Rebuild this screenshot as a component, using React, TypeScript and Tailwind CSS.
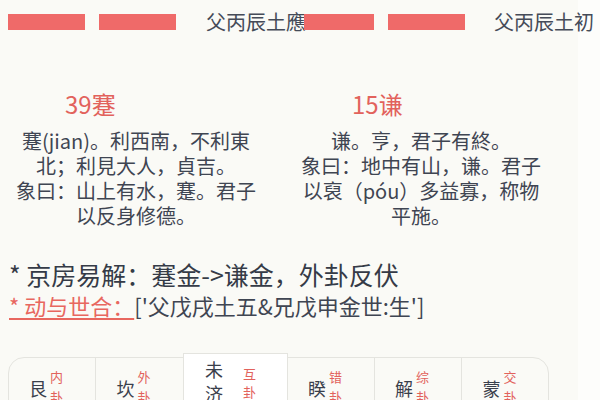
import React from 'react';

const tabs = [
  { id: 'gen', name: '艮', label: '内卦' },
  { id: 'kan', name: '坎', label: '外卦' },
  { id: 'weiji', name: '未济', label: '互卦', active: true },
  { id: 'kui', name: '睽', label: '错卦' },
  { id: 'jie', name: '解', label: '综卦' },
  { id: 'meng', name: '蒙', label: '交卦' },
];

function YaoRow({ text }: { text: string }) {
  return (
    <div className="flex items-center h-[16px]">
      <div className="w-[77px] h-[16px] bg-[#ef6a69]" />
      <div className="ml-[14px] w-[77px] h-[16px] bg-[#ef6a69]" />
      <div className="ml-[30px] text-[20px] leading-none whitespace-nowrap text-[#454b58]">{text}</div>
    </div>
  );
}

export default function App() {
  return (
    <div className="w-[600px] h-[400px] overflow-hidden bg-[#fdfdfb] font-['Noto_Sans_CJK_SC',sans-serif] text-[#3f4552]">
      <div className="w-[578px] h-full bg-[#fafaf6]">
        {/* 爻 */}
        <div className="flex pt-[14px] pl-[8px]">
          <YaoRow text="父丙辰土應" />
          <div className="-ml-[2px] flex items-center h-[16px]">
            <div className="w-[70px] h-[16px] bg-[#ef6a69]" />
            <div className="ml-[14px] w-[77px] h-[16px] bg-[#ef6a69]" />
            <div className="ml-[29px] text-[20px] leading-none whitespace-nowrap text-[#454b58]">父丙辰土初</div>
          </div>
        </div>

        {/* 本卦 / 变卦 */}
        <div className="flex pl-[12px] mt-[58px]">
          <div className="w-[248px]">
            <div className="pl-[53px] text-[24px] leading-[32px] text-[#e2625c]">39蹇</div>
            <div className="mt-[8px] text-center text-[20px] leading-[25px]">
              蹇(jian)。利西南，不利東北；利見大人，貞吉。
              <br />
              象曰：山上有水，蹇。君子以反身修德。
            </div>
          </div>
          <div className="ml-[37px] w-[248px]">
            <div className="pl-[55px] text-[24px] leading-[32px] text-[#e2625c]">15谦</div>
            <div className="mt-[8px] text-center text-[20px] leading-[25px]">
              谦。亨，君子有終。
              <br />
              象曰：地中有山，谦。君子以裒（póu）多益寡，称物平施。
            </div>
          </div>
        </div>

        {/* 京房 */}
        <div className="mt-[30px] pl-[9px]">
          <div className="text-[25px] leading-[32px] text-[#353b47] whitespace-nowrap">* 京房易解：蹇金-&gt;谦金，外卦反伏</div>
          <div className="text-[22px] leading-[30px] whitespace-nowrap">
            <span className="text-[#e8675f] underline underline-offset-[3px] decoration-[1.5px]">* 动与世合：</span>
            <span>['父戊戌土五&amp;兄戊申金世:生']</span>
          </div>
        </div>

        {/* 卦变 tabs */}
        <div className="mt-[37px] ml-[8px] w-[541px] h-[60px] flex border border-[#e4e4df] rounded-t-[16px]">
          {tabs.map((t, i) =>
            t.active ? (
              <div
                key={t.id}
                className="relative -mt-[5px] w-[105px] h-[70px] shrink-0 bg-white border-x border-t border-[#e4e4df] flex items-start justify-center pr-[10px] pt-[3px]"
              >
                <div className="flex flex-col text-[18px] leading-[24px] text-[#3a404c]">
                  {t.name.split('').map((c) => (
                    <span key={c}>{c}</span>
                  ))}
                </div>
                <div className="ml-[20px] mt-[8px] flex flex-col text-[13px] leading-[18px] text-[#e2625c]">
                  {t.label.split('').map((c) => (
                    <span key={c}>{c}</span>
                  ))}
                </div>
              </div>
            ) : (
              <div
                key={t.id}
                className={`shrink-0 w-[87px] ${tabs[i + 1] && !tabs[i + 1].active ? 'border-r border-[#e4e4df]' : ''} flex items-center justify-center pr-[12px] h-[58px]`}
              >
                <span className="text-[18px] leading-[24px] text-[#3a404c] mt-[2px]">{t.name}</span>
                <div className="ml-[3px] flex flex-col text-[13px] leading-[20px] text-[#e2625c]">
                  {t.label.split('').map((c) => (
                    <span key={c}>{c}</span>
                  ))}
                </div>
              </div>
            )
          )}
        </div>
      </div>
    </div>
  );
}
